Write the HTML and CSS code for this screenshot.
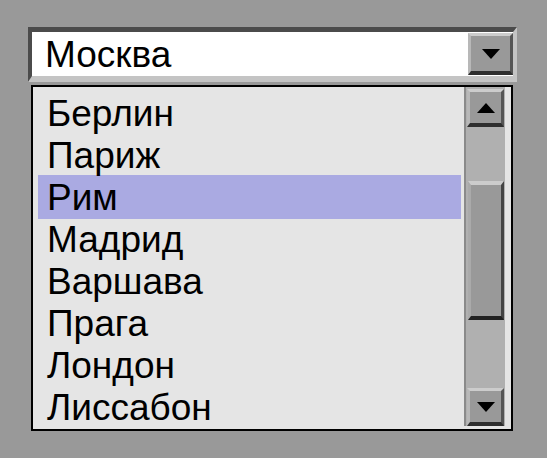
FILE: index.html
```html
<!DOCTYPE html>
<html lang="ru">
<head>
<meta charset="utf-8">
<title>Город</title>
<link rel="stylesheet" href="styles.css">
</head>
<body>
<div class="page">
  <div class="combo">
    <div class="combo-text">Москва</div>
    <div class="btn combo-btn"><span class="arrow down"></span></div>
  </div>
  <div class="listbox">
    <ul class="items">
      <li class="item">Берлин</li>
      <li class="item">Париж</li>
      <li class="item selected">Рим</li>
      <li class="item">Мадрид</li>
      <li class="item">Варшава</li>
      <li class="item">Прага</li>
      <li class="item">Лондон</li>
      <li class="item">Лиссабон</li>
    </ul>
    <div class="scrollbar">
      <div class="btn sb-btn"><span class="arrow up"></span></div>
      <div class="track">
        <div class="thumb"></div>
      </div>
      <div class="btn sb-btn"><span class="arrow down"></span></div>
    </div>
  </div>
</div>
</body>
</html>
```
FILE: styles.css
```css
html, body {
  margin: 0;
  padding: 0;
}
body {
  background: #999999;
  width: 547px;
  height: 458px;
  overflow: hidden;
  font-family: "Liberation Sans", Arial, sans-serif;
  color: #000;
}
.page {
  padding: 27px 0 0 28px;
}
.combo {
  box-sizing: border-box;
  width: 489px;
  height: 55px;
  display: flex;
  align-items: center;
  border-top: 5px solid #4b4b4b;
  border-left: 4px solid #4b4b4b;
  border-right: 4px solid #c4c4c4;
  border-bottom: 6px solid #c4c4c4;
  background: #ffffff;
}
.combo-text {
  flex: 1;
  font-size: 37px;
  line-height: 44px;
  padding-left: 13px;
  padding-top: 2px;
}
.btn {
  box-sizing: border-box;
  background: #999999;
  border-top: 3px solid #cccccc;
  border-left: 3px solid #b8b8b8;
  border-right: 3px solid #555555;
  border-bottom: 4px solid #2e2e2e;
  display: flex;
  align-items: center;
  justify-content: center;
}
.combo-btn {
  width: 45px;
  height: 42px;
}
.arrow {
  width: 0;
  height: 0;
  border-left: 9px solid transparent;
  border-right: 9px solid transparent;
}
.arrow.down {
  border-top: 10px solid #000;
}
.arrow.up {
  border-bottom: 10px solid #000;
}
.listbox {
  box-sizing: border-box;
  margin: 3px 0 0 3px;
  width: 482px;
  height: 346px;
  border: 2px solid #000;
  background: #e5e5e5;
  display: flex;
}
.items {
  list-style: none;
  margin: 0;
  padding: 6px 3px 0 5px;
  flex: 1;
}
.item {
  font-size: 37px;
  line-height: 42px;
  height: 42px;
  padding-left: 9px;
}
.item.selected {
  background: #aaaae2;
  margin-top: -2px;
  height: 44px;
  line-height: 46px;
}
.scrollbar {
  box-sizing: border-box;
  width: 41px;
  margin: 0 6px 3px 0;
  background: #b0b0b0;
  border-left: 2px solid #8a8a8a;
  padding: 2px 1px 0 1px;
  display: flex;
  flex-direction: column;
}
.sb-btn {
  width: 37px;
  height: 38px;
}
.track {
  flex: 1;
  display: flex;
  flex-direction: column;
  padding-top: 54px;
  padding-bottom: 68px;
}
.thumb {
  box-sizing: border-box;
  flex: 1;
  width: 36px;
  margin-left: 1px;
  background: #999999;
  border-top: 4px solid #cccccc;
  border-left: 3px solid #aaaaaa;
  border-right: 3px solid #444444;
  border-bottom: 4px solid #222222;
}
```
